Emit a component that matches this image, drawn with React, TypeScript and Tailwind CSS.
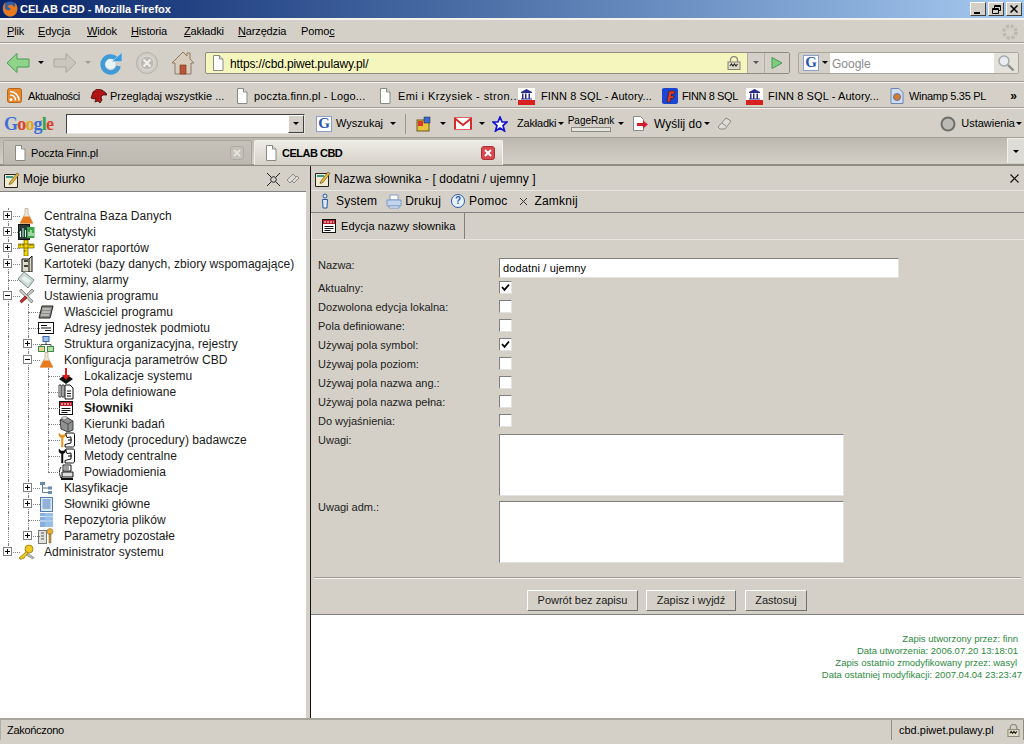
import React from "react";

const Caret: React.FC<{ c?: string }> = ({ c = "border-t-black" }) => (
  <span className={`inline-block w-0 h-0 border-x-[3px] border-x-transparent border-t-[3px] ${c}`} />
);

const PageIcon: React.FC = () => (
  <svg width="14" height="16" viewBox="0 0 14 16" className="shrink-0">
    <path d="M2.500.5h6l3.500 3.500v11.500h-9.500z" fill="#fff" stroke="#8a8a84" />
    <path d="M8.500.5v3.500h3.500" fill="#e4e4de" stroke="#8a8a84" />
  </svg>
);

const Firefox = () => (
  <svg width="16" height="16" viewBox="0 0 16 16">
    <circle cx="8" cy="8" r="7.500" fill="#2f5fa8" />
    <path d="M3 1.500c-3 4-2.500 9 .5 12s9 3 11-2 .5-8-2-10c1 2 1 4-.5 4.500-1-2-3-2.500-4.500-2-1 1-2 1-2 2 1 1 3 .5 3 2s-3 2-5 0c-1-2-.5-4 0-6.500z" fill="#e8791c" />
  </svg>
);

const BackArrow = () => (
  <svg width="24" height="22" viewBox="0 0 24 22">
    <path d="M1 11 11 1.500v5.500h12v8H11v5.500z" fill="#8fd48a" stroke="#4a9a55" />
  </svg>
);
const ForwardArrow = () => (
  <svg width="24" height="22" viewBox="0 0 24 22">
    <path d="M23 11 13 1.500v5.500H1v8h12v5.500z" fill="#c9c6be" stroke="#aaa79f" />
  </svg>
);
const Reload = () => (
  <svg width="24" height="24" viewBox="0 0 24 24">
    <circle cx="11.500" cy="13" r="5" fill="#e8f4fb" />
    <path d="M17 7.500A8 8 0 1 0 19.500 15" fill="none" stroke="#3f9bd8" strokeWidth="4.500" />
    <path d="M13 10.500h10V1.500z" fill="#3f9bd8" stroke="#bfe0f4" strokeWidth=".6" />
  </svg>
);
const Stop = () => (
  <svg width="24" height="24" viewBox="0 0 24 24">
    <circle cx="12" cy="12" r="10.500" fill="#cfccc5" stroke="#b4b1a9" />
    <circle cx="12" cy="12" r="7" fill="#bcb9b2" stroke="#e4e2dc" />
    <path d="m8.500 8.500 7 7m0-7-7 7" stroke="#f1efea" strokeWidth="2.200" />
  </svg>
);
const Home = () => (
  <svg width="24" height="24" viewBox="0 0 24 24">
    <path d="M12 1 1 12h3v11h16V12h3l-4-4V2h-3v3z" fill="#d8cdbd" stroke="#8f7a66" />
    <path d="M9 14h6v9H9z" fill="#b5563a" stroke="#8c3a24" strokeWidth=".7" />
  </svg>
);
const Lock = ({ size = 14 }: { size?: number }) => (
  <svg width={size} height={size} viewBox="0 0 14 14">
    <path d="M3.500 6V4a3.500 3.500 0 0 1 7 0v2" fill="none" stroke="#8e8c84" strokeWidth="1.400" />
    <rect x="1" y="6" width="12" height="7.500" fill="#dedcc6" stroke="#85836f" />
    <path d="m3 10 1.500-2L6 10l1.500-2L9 10l1.500-2" fill="none" stroke="#222" strokeWidth="1.100" />
  </svg>
);
const GoArrow = () => (
  <svg width="12" height="14" viewBox="0 0 12 14">
    <path d="M1 1.500v11l10-5.500z" fill="#7fcb7f" stroke="#3f9a55" />
  </svg>
);
const GBox = ({ s = 16 }: { s?: number }) => (
  <span
    className="flex items-center justify-center bg-white border border-[#8aa0c8] text-[#2a55b4] font-['Liberation_Serif'] font-bold leading-none"
    style={{ width: s, height: s, fontSize: s - 1 }}
  >
    G
  </span>
);
const Magnifier = () => (
  <svg width="18" height="18" viewBox="0 0 18 18">
    <circle cx="7" cy="7" r="5" fill="#e9edef" stroke="#a5a8a8" strokeWidth="1.500" />
    <path d="m11 11 5.500 5.500" stroke="#8e8e88" strokeWidth="2.400" />
  </svg>
);
const Rss = () => (
  <svg width="16" height="16" viewBox="0 0 16 16">
    <rect x=".5" y=".5" width="14" height="14" rx="2" fill="#e8862c" stroke="#b8641a" />
    <circle cx="4" cy="11.500" r="1.500" fill="#fff" />
    <path d="M3 7a5 5 0 0 1 5.500 5.500M3 3.500a9 9 0 0 1 9 9" fill="none" stroke="#fff" strokeWidth="1.500" />
  </svg>
);
const Dino = () => (
  <svg width="17" height="14" viewBox="0 0 17 14">
    <path d="M1 9 3 3l4-3 5 1 4 3 1 2-4 0-2 2 1 3-2 3-2-2-3 1 1-4-2 1z" fill="#b01414" stroke="#300" strokeWidth=".7" />
  </svg>
);
const Doa = () => (
  <svg width="17" height="17" viewBox="0 0 17 17">
    <rect width="17" height="17" fill="#fff" />
    <path d="M3 4 8.500 1 14 4v1H3z" fill="#2b2b8f" />
    <path d="M4 5.500h1.500v5H4zm3 0h1.500v5H7zm3.500 0H12v5h-1.500zM3 10.500h11v1H3z" fill="#2b2b8f" />
    <rect y="12" width="17" height="5" fill="#d82020" />
  </svg>
);
const FinnLogo = () => (
  <svg width="16" height="16" viewBox="0 0 16 16">
    <rect width="16" height="16" rx="2" fill="#1c46d0" />
    <path d="M5 14 7 3h6l-.5 3H9.500l-.4 2h3l-.5 2.500h-3L8 14z" fill="#e63a20" stroke="#111" strokeWidth=".5" />
  </svg>
);
const WinampDoc = () => (
  <svg width="14" height="16" viewBox="0 0 14 16">
    <path d="M1 .5h8l4 4v11H1z" fill="#cfdcf0" stroke="#6f86ad" />
    <circle cx="7" cy="9" r="3.500" fill="#d97a2a" stroke="#5a76a8" />
  </svg>
);

const Chrome: React.FC<React.PropsWithChildren<{ className?: string }>> = ({ className = "", children }) => (
  <div className={`flex items-center border-b border-[#a09d95] shrink-0 ${className}`}>{children}</div>
);

const TitleBar = () => (
  <div className="h-[18px] shrink-0 flex items-center pl-[2px] pr-[2px] bg-gradient-to-r from-[#0a246a] to-[#a6caf0]">
    <Firefox />
    <span className="ml-[2px] text-white font-bold text-[11px]">CELAB CBD - Mozilla Firefox</span>
    <div className="ml-auto flex">
      {[0, 1, 2].map((i) => (
        <span
          key={i}
          className={`w-4 h-[14px] bg-[#d4d0c8] border border-t-white border-l-white border-r-[#404040] border-b-[#404040] flex items-center justify-center ${i === 1 ? "mx-[2px]" : ""}`}
        >
          {i === 0 ? <span className="w-[6px] h-[2px] bg-black mt-[7px] -ml-[2px]" /> : i === 1 ? (
            <svg width="9" height="9" viewBox="0 0 9 9"><path d="M2.500.5h6v5h-2M2.500 1.500h6M.5 3.500h6v5h-6zM.5 4.500h6M2.500.5v3" fill="none" stroke="#000" /></svg>
          ) : (
            <svg width="8" height="8" viewBox="0 0 8 8"><path d="m.5.500 7 7m0-7-7 7" stroke="#000" strokeWidth="1.500" /></svg>
          )}
        </span>
      ))}
    </div>
  </div>
);

const menu: [string, string, string, string][] = [
  ["", "P", "lik", "w-[31px]"],
  ["", "E", "dycja", "w-[49px]"],
  ["", "W", "idok", "w-[44px]"],
  ["", "H", "istoria", "w-[53px]"],
  ["", "Z", "akładki", "w-[54px]"],
  ["", "N", "arzędzia", "w-[63px]"],
  ["Pomo", "c", "", "w-[40px]"],
];

const MenuBar = () => (
  <Chrome className="h-[25px] border-t-2 border-t-[#f4f2ec] pl-[7px] pr-[5px] pt-[1px] text-[11px] tracking-[-0.15px]">
    {menu.map(([a, u, b, w]) => (
      <span key={u + b} className={w}>
        {a}
        <span className="underline">{u}</span>
        {b}
      </span>
    ))}
    <svg width="18" height="18" viewBox="0 0 18 18" className="ml-auto">
      <circle cx="9" cy="9" r="6" fill="none" stroke="#bdbab2" strokeWidth="3.500" strokeDasharray="3 1.700" />
    </svg>
  </Chrome>
);

const NavBar = () => (
  <Chrome className="h-[39px] border-t border-t-[#f4f2ec] pl-[6px] pr-[5px]">
    <BackArrow />
    <span className="ml-[8px] flex"><Caret /></span>
    <span className="ml-[9px] flex"><ForwardArrow /></span>
    <span className="ml-[8px] flex"><Caret c="border-t-[#a09d95]" /></span>
    <span className="ml-[8px] flex"><Reload /></span>
    <span className="ml-[12px] flex"><Stop /></span>
    <span className="ml-[12px] flex"><Home /></span>
    <div className="ml-[10px] w-[585px] h-[22px] flex items-center rounded-[2px] border border-[#8f8c84] bg-[#f5f6be]">
      <span className="ml-[5px] flex"><PageIcon /></span>
      <span className="ml-[5px] text-[12px] tracking-[-0.15px] pt-[2px]">https://cbd.piwet.pulawy.pl/</span>
      <span className="ml-auto mr-[6px] flex"><Lock /></span>
      <span className="w-[17px] h-full bg-[#d4d0c8] border-l border-[#b0ada5] flex items-center justify-center"><Caret c="border-t-[#555]" /></span>
      <span className="w-[25px] h-full bg-[#d4d0c8] border-l border-[#b0ada5] flex items-center justify-center rounded-r-[2px]"><GoArrow /></span>
    </div>
    <div className="ml-[8px] w-[221px] h-[22px] flex items-center border border-[#a9a69e] rounded-[2px]">
      <span className="pl-[4px] w-[31px] flex items-center gap-[3px]"><GBox /><Caret /></span>
      <span className="w-[164px] h-full bg-white flex items-center pl-[2px] pt-[2px] text-[12px] text-[#8a8a8a]">Google</span>
      <span className="flex-1 h-full bg-[#e3e1da] flex items-center justify-center"><Magnifier /></span>
    </div>
  </Chrome>
);

const bookmarks: { icon: React.ReactNode; label: string; w: string; gap: string; t: string }[] = [
  { icon: <Rss />, label: "Aktualności", w: "w-[83px]", gap: "gap-[5px]", t: "tracking-[-0.4px]" },
  { icon: <Dino />, label: "Przeglądaj wszystkie ...", w: "w-[145px]", gap: "gap-[3px]", t: "tracking-normal" },
  { icon: <PageIcon />, label: "poczta.finn.pl - Logo...", w: "w-[143px]", gap: "gap-[5px]", t: "tracking-[0.13px]" },
  { icon: <PageIcon />, label: "Emi i Krzysiek - stron...", w: "w-[140px]", gap: "gap-[6px]", t: "tracking-[0.4px]" },
  { icon: <Doa />, label: "FINN 8 SQL - Autory...", w: "w-[144px]", gap: "gap-[6px]", t: "tracking-[0.1px]" },
  { icon: <FinnLogo />, label: "FINN 8 SQL", w: "w-[84px]", gap: "gap-[4px]", t: "tracking-[-0.4px]" },
  { icon: <Doa />, label: "FINN 8 SQL - Autory...", w: "w-[144px]", gap: "gap-[5px]", t: "tracking-[0.1px]" },
  { icon: <WinampDoc />, label: "Winamp 5.35 PL", w: "w-[112px]", gap: "gap-[5px]", t: "tracking-[-0.3px]" },
];

const BookmarksBar = () => (
  <Chrome className="h-[26px] border-t border-t-[#f4f2ec] pl-[7px] pt-[2px] text-[11px]">
    {bookmarks.map((b, i) => (
      <span key={i} className={`flex items-center whitespace-nowrap ${b.w} ${b.gap}`}>
        <span className="flex shrink-0">{b.icon}</span>
        <span className={b.t}>{b.label}</span>
      </span>
    ))}
    <span className="ml-auto mr-[7px] font-bold text-[12px] leading-none">»</span>
  </Chrome>
);

const GoogleBar = () => (
  <Chrome className="h-[30px] border-t border-t-[#f4f2ec] pl-[4px] pt-[1px] text-[11px]">
    <span className="w-[62px] font-['Liberation_Serif'] font-bold text-[18px] leading-none tracking-[-0.8px]">
      <span className="text-[#3c6fd8]">G</span>
      <span className="text-[#d8442e]">o</span>
      <span className="text-[#e0a818]">o</span>
      <span className="text-[#3c6fd8]">g</span>
      <span className="text-[#3aa04a]">l</span>
      <span className="text-[#d8442e]">e</span>
    </span>
    <div className="w-[239px] h-5 bg-white border border-t-[#404040] border-l-[#404040] border-r-[#e8e6e0] border-b-[#e8e6e0] flex justify-end">
      <span className="w-4 h-[18px] bg-[#d4d0c8] border border-t-white border-l-white border-r-[#404040] border-b-[#404040] flex items-center justify-center"><Caret /></span>
    </div>
    <span className="ml-[11px] flex"><GBox /></span>
    <span className="ml-[4px] w-[54px]">Wyszukaj</span>
    <Caret />
    <span className="ml-[9px] w-[9px] h-5 border-l border-[#9a978f]" />
    <svg width="16" height="16" viewBox="0 0 16 16" className="ml-[2px]">
      <rect x="1" y="4" width="12" height="11" fill="#e8c23a" stroke="#6a5a20" />
      <rect x="2" y="5" width="5" height="5" fill="#d83a2a" />
      <rect x="8" y="1" width="6" height="6" fill="#3a6ad0" stroke="#223" strokeWidth=".5" />
    </svg>
    <span className="ml-[8px] flex"><Caret /></span>
    <svg width="18" height="13" viewBox="0 0 18 13" className="ml-[8px]">
      <rect x=".5" y=".5" width="17" height="12" fill="#fff" stroke="#e06060" />
      <path d="M1 1.500 9 8l8-6.500M1 1v11M17 1v11" fill="none" stroke="#d82a2a" strokeWidth="2" />
    </svg>
    <span className="ml-[7px] flex"><Caret /></span>
    <svg width="16" height="16" viewBox="0 0 16 16" className="ml-[7px]">
      <path d="m8 1 2 5h5l-4 3.500 1.500 5.500L8 12l-4.500 3L5 9.500 1 6h5z" fill="#fff" stroke="#1414d0" strokeWidth="1.700" />
    </svg>
    <span className="ml-[9px] w-[41px] tracking-[-0.2px]">Zakładki</span>
    <span className="flex"><Caret /></span>
    <span className="ml-[5px] w-[44px] flex flex-col items-center leading-none">
      <span className="text-[10px]">PageRank</span>
      <span className="mt-[1px] w-[40px] h-[5px] border border-[#8d8a82] bg-[#e4e2dc]" />
    </span>
    <span className="ml-[5px] flex"><Caret /></span>
    <svg width="17" height="17" viewBox="0 0 17 17" className="ml-[8px]">
      <path d="M1.500 1.500h7l3 3v11h-10z" fill="#fff" stroke="#8a8a84" />
      <path d="M5 8h6V5.500l5 4-5 4V11H5z" fill="#d01c2c" />
    </svg>
    <span className="ml-[5px] w-[49px] text-[12px]">Wyślij do</span>
    <span className="ml-[1px] flex"><Caret /></span>
    <svg width="15" height="15" viewBox="0 0 15 15" className="ml-[7px]">
      <path d="M1 11 9 2l5 3-6 8H3z" fill="#dedcd6" stroke="#8d8a82" />
      <path d="m5 7 4 3" stroke="#8d8a82" />
    </svg>
    <span className="ml-auto flex items-center">
      <svg width="16" height="16" viewBox="0 0 16 16">
        <circle cx="8" cy="8" r="7.500" fill="#6f6d67" />
        <circle cx="8" cy="8" r="5.500" fill="#bcbab4" />
      </svg>
      <span className="ml-[5px]">Ustawienia</span>
      <span className="ml-[1px] mr-[2px] flex"><Caret /></span>
    </span>
  </Chrome>
);

const BrowserTab: React.FC<{ label: string; active?: boolean }> = ({ label, active }) => (
  <div
    className={`w-[249px] h-[25px] -mb-[2px] relative flex items-center pl-[9px] pr-[7px] rounded-t-[2px] text-[11px] ${
      active
        ? "bg-gradient-to-b from-[#eeece6] to-[#d4d0c8] font-bold tracking-[-0.5px] border-x border-t border-[#f2f0ea]"
        : "bg-gradient-to-b from-[#c6c2ba] to-[#bdb9b1] tracking-[-0.2px] border border-[#a8a59d]"
    }`}
  >
    <PageIcon />
    <span className="ml-[4px] pt-[1px]">{label}</span>
    <span
      className={`ml-auto w-[14px] h-[14px] rounded-[3px] flex items-center justify-center ${
        active ? "bg-[#d8484c] border border-[#a83034]" : "bg-[#c4c1b9] border border-[#aeaba3]"
      }`}
    >
      <svg width="8" height="8" viewBox="0 0 8 8"><path d="m1 1 6 6m0-6-6 6" stroke={active ? "#fff" : "#e4e2dc"} strokeWidth="2" /></svg>
    </span>
  </div>
);

const TabBar = () => (
  <div className="h-[28px] shrink-0 flex items-end pl-[3px] gap-[2px] bg-gradient-to-b from-[#bcb8b0] to-[#d4d0c8] border-b-2 border-[#8f8c84] pb-[1px]">
    <BrowserTab label="Poczta Finn.pl" />
    <BrowserTab label="CELAB CBD" active />
    <span className="ml-auto w-[17px] h-[25px] bg-[#dedcd6] border-l border-t border-[#f2f0ea] flex items-center justify-center"><Caret /></span>
  </div>
);

/* tree icons */
const Desk = () => (
  <svg width="17" height="17" viewBox="0 0 17 17">
    <path d="M1.500 3.500h13v13h-13z" fill="#f4ecd0" stroke="#222" />
    <path d="M3 5h7v2H3z" fill="#3a9a8a" />
    <path d="m7 11 7-9 2 1.500-7 9-3 1z" fill="#e8b830" stroke="#543" strokeWidth=".6" />
  </svg>
);
const Flask = () => (
  <svg width="17" height="16" viewBox="0 0 17 16">
    <path d="M7 .5h3v5l5 9.500H2l5-9.500z" fill="#efe6d4" stroke="#b0a890" strokeWidth=".7" />
    <path d="M5.500 8.500h6l3.500 7H2z" fill="#e67a1c" />
  </svg>
);
const Stats = () => (
  <svg width="17" height="16" viewBox="0 0 17 16">
    <rect x=".5" y=".5" width="11" height="15" fill="#2a3a36" stroke="#111" />
    <rect x="9" y="3" width="7.500" height="11" fill="#3aa848" />
    <path d="M2.500 13V7m2.500 6V4m2.500 9V6" stroke="#cfe" />
    <path d="M11 12V8m2 4V6m2 6V9" stroke="#fff" />
  </svg>
);
const Ruler = () => (
  <svg width="17" height="16" viewBox="0 0 17 16">
    <path d="M0 4h16v4H0zM6 0h4v16H6z" fill="#f5d800" stroke="#6a5c00" strokeWidth=".7" />
    <path d="M2 4v2m3-2v2m7-2v2m2-2v2M6 11h2" stroke="#333" strokeWidth=".7" />
  </svg>
);
const Cabinet = () => (
  <svg width="15" height="16" viewBox="0 0 15 16">
    <path d="M3 3h7l3-3v16H3z" fill="#dddcc8" stroke="#111" />
    <path d="M5 5h4M5 10h4" stroke="#111" strokeWidth="1.500" />
    <path d="M10 3v13" stroke="#111" />
  </svg>
);
const Diamond = () => (
  <svg width="18" height="16" viewBox="0 0 18 16">
    <path d="m1 7 6-7 10 8-6 8z" fill="#cfe2dc" stroke="#7f8a86" />
    <path d="m3.500 7 3.500-4 7.500 5.500-3.500 4z" fill="#e8f2ef" stroke="#aab" strokeWidth=".5" />
  </svg>
);
const Tools = () => (
  <svg width="17" height="16" viewBox="0 0 17 16">
    <path d="M3 1 15 13l-1.500 2L1.500 3z" fill="#c8c8c4" stroke="#666" strokeWidth=".7" />
    <path d="m14 1-5 5 1.500 1.500L16 3z" fill="#c8c8c4" stroke="#666" strokeWidth=".7" />
    <path d="M7 8l-5 5 1.500 2L9 10z" fill="#c82c2c" stroke="#600" strokeWidth=".6" />
  </svg>
);
const Owner = () => (
  <svg width="16" height="14" viewBox="0 0 16 14">
    <path d="M4 1h11l-3 12H1z" fill="#8a8a88" stroke="#222" />
    <path d="M4.500 4h8M4 7h8M3 10h8" stroke="#e4e4e0" />
  </svg>
);
const AddressCard = () => (
  <svg width="16" height="12" viewBox="0 0 16 12">
    <rect x=".5" y=".5" width="15" height="11" fill="#fff" stroke="#111" />
    <path d="M3 3.500h6M3 6h10M7 8.500h6" stroke="#111" />
  </svg>
);
const Org = () => (
  <svg width="16" height="16" viewBox="0 0 16 16">
    <rect x="5" y="0.500" width="6" height="5" fill="#9cc4ec" stroke="#3a68a8" />
    <path d="M8 5.500v3M3 10V8.500h10V10" fill="none" stroke="#555" />
    <rect x=".5" y="10.500" width="6" height="5" fill="#e8d48a" stroke="#3a8a4a" />
    <rect x="9.500" y="10.500" width="6" height="5" fill="#b8e0a0" stroke="#3a8a4a" />
  </svg>
);
const DownArrowBlack = () => (
  <svg width="16" height="16" viewBox="0 0 16 16">
    <path d="m8 6 7 5-7 5-7-5z" fill="#111" />
    <path d="M7 0h2v7h3l-4 5-4-5h3z" fill="#e01818" />
  </svg>
);
const Pages = () => (
  <svg width="16" height="16" viewBox="0 0 16 16">
    <path d="M1 1h2v12H1zM4 1h2v12H4z" fill="#fff" stroke="#111" strokeWidth=".8" />
    <path d="M7 1h5l3 3v11H7z" fill="#fff" stroke="#111" />
    <path d="M9 7h4M9 9.500h4M9 12h4" stroke="#111" />
  </svg>
);
const Dict = () => (
  <svg width="14" height="14" viewBox="0 0 14 14">
    <rect x=".5" y=".5" width="13" height="13" fill="#fff" stroke="#111" />
    <rect x="1" y="1" width="12" height="4" fill="#b81c28" />
    <path d="M2 3h10" stroke="#fff" strokeDasharray="2 1" />
    <path d="M2.500 7.500h9M2.500 9.500h9M2.500 11.500h6" stroke="#111" />
  </svg>
);
const Directions = () => (
  <svg width="15" height="16" viewBox="0 0 15 16">
    <path d="M1 4 7 1l7 4v9l-5 2-7-3z" fill="#8f9290" stroke="#222" strokeWidth=".8" />
    <path d="m1 4 8 4v8M9 8l5-3" fill="none" stroke="#333" strokeWidth=".7" />
    <path d="m2 2 4-2 3 2-4 2z" fill="#ddd" stroke="#444" strokeWidth=".5" />
  </svg>
);
const Method: React.FC<{ c: string }> = ({ c }) => (
  <svg width="17" height="16" viewBox="0 0 17 16">
    <path d="M1 1v3l2.500 2v9H5V6l2.500-2V1L6 3H3z" fill={c} stroke={c} strokeWidth=".5" />
    <path d="M8 1h7c1.500 0 1.500 1 1.500 2v10c0 1.500-1 2-2 2H7v-2.500L13 11V5L9 5.500 8 3z" fill="#fff" stroke="#111" />
    <path d="M10 8h4" stroke="#111" />
  </svg>
);
const Notify = () => (
  <svg width="16" height="16" viewBox="0 0 16 16">
    <path d="M5 1h8v6H5zM3 3c-2 3-2 7 0 11l1-1" fill="#fff" stroke="#111" />
    <path d="M4 8h11v5H4z" fill="#ddd" stroke="#111" />
    <path d="M6 3h5M6 5h5" stroke="#111" strokeWidth=".8" />
    <path d="M3 15h12" stroke="#111" strokeWidth="2" />
  </svg>
);
const Classif = () => (
  <svg width="14" height="14" viewBox="0 0 14 14">
    <path d="M3.500 3v8.500H9M3.500 7H9" fill="none" stroke="#5a7898" />
    <rect x="1" y="1" width="5" height="3" fill="#6a8ab0" />
    <rect x="9" y="5.500" width="4" height="3" fill="#6a8ab0" />
    <rect x="9" y="10" width="4" height="3" fill="#6a8ab0" />
  </svg>
);
const DictMain = () => (
  <svg width="13" height="15" viewBox="0 0 13 15">
    <rect x=".5" y=".5" width="12" height="14" fill="#dbe8f8" stroke="#4d7cb8" />
    <path d="M2.500 3h8M2.500 5h8M2.500 7h8M2.500 9h8M2.500 11h8" stroke="#4d7cb8" />
  </svg>
);
const Repo = () => (
  <svg width="13" height="14" viewBox="0 0 13 14">
    <rect width="13" height="14" fill="#86aedc" />
    <path d="M0 3.500h13M0 8h13" stroke="#e4eefa" />
    <rect x="5" width="8" height="14" fill="#a6c8ec" opacity=".6" />
  </svg>
);
const Params = () => (
  <svg width="16" height="16" viewBox="0 0 16 16">
    <rect x=".5" y="2.500" width="8" height="13" fill="#e4e2dc" stroke="#777" />
    <path d="M3 5h3M3 8h3M3 11h3" stroke="#555" />
    <circle cx="12" cy="3.500" r="3" fill="#e8b030" stroke="#765" strokeWidth=".5" />
    <path d="M11 6h2v9h-2z" fill="#d09a20" stroke="#654" strokeWidth=".5" />
  </svg>
);
const Key = () => (
  <svg width="17" height="16" viewBox="0 0 17 16">
    <path d="m6 10 9 5 1-1.500-8-5.500z" fill="#b8b8b4" stroke="#666" strokeWidth=".5" />
    <circle cx="11" cy="5" r="4" fill="#f0c820" stroke="#8a6e00" strokeWidth=".7" />
    <path d="M8.500 7.500 1 14l2 1.500 2-1.500 1 .5 1-2 3-3z" fill="#f0c820" stroke="#8a6e00" strokeWidth=".7" />
  </svg>
);

type Row = {
  label: string;
  icon: React.ReactNode;
  level: 0 | 1 | 2;
  box?: "+" | "-";
  guides: boolean[];
  bold?: boolean;
  end?: boolean;
};

const rows: Row[] = [
  { label: "Centralna Baza Danych", icon: <Flask />, level: 0, box: "+", guides: [] },
  { label: "Statystyki", icon: <Stats />, level: 0, box: "+", guides: [] },
  { label: "Generator raportów", icon: <Ruler />, level: 0, box: "+", guides: [] },
  { label: "Kartoteki (bazy danych, zbiory wspomagające)", icon: <Cabinet />, level: 0, box: "+", guides: [] },
  { label: "Terminy, alarmy", icon: <Diamond />, level: 0, guides: [] },
  { label: "Ustawienia programu", icon: <Tools />, level: 0, box: "-", guides: [] },
  { label: "Właściciel programu", icon: <Owner />, level: 1, guides: [true] },
  { label: "Adresy jednostek podmiotu", icon: <AddressCard />, level: 1, guides: [true] },
  { label: "Struktura organizacyjna, rejestry", icon: <Org />, level: 1, box: "+", guides: [true] },
  { label: "Konfiguracja parametrów CBD", icon: <Flask />, level: 1, box: "-", guides: [true] },
  { label: "Lokalizacje systemu", icon: <DownArrowBlack />, level: 2, guides: [true, true] },
  { label: "Pola definiowane", icon: <Pages />, level: 2, guides: [true, true] },
  { label: "Słowniki", icon: <Dict />, level: 2, guides: [true, true], bold: true },
  { label: "Kierunki badań", icon: <Directions />, level: 2, guides: [true, true] },
  { label: "Metody (procedury) badawcze", icon: <Method c="#e89018" />, level: 2, guides: [true, true] },
  { label: "Metody centralne", icon: <Method c="#111" />, level: 2, guides: [true, true] },
  { label: "Powiadomienia", icon: <Notify />, level: 2, guides: [true, true], end: true },
  { label: "Klasyfikacje", icon: <Classif />, level: 1, box: "+", guides: [true] },
  { label: "Słowniki główne", icon: <DictMain />, level: 1, box: "+", guides: [true] },
  { label: "Repozytoria plików", icon: <Repo />, level: 1, guides: [true] },
  { label: "Parametry pozostałe", icon: <Params />, level: 1, box: "+", guides: [true], end: true },
  { label: "Administrator systemu", icon: <Key />, level: 0, box: "+", guides: [], end: true },
];

const dotted = "border-[#808080] border-dotted";

const TreeRow: React.FC<{ row: Row }> = ({ row }) => (
  <div className="h-4 flex items-center">
    {[0, 1].slice(0, row.level).map((i) => (
      <span key={i} className="relative w-5 h-4 shrink-0">
        {row.guides[i] && <span className={`absolute left-2 top-0 bottom-0 border-l ${dotted}`} />}
      </span>
    ))}
    <span className="relative w-5 h-4 shrink-0 flex items-center">
      <span className={`absolute left-2 top-0 ${row.end ? "h-2" : "bottom-0"} border-l ${dotted}`} />
      <span className={`absolute left-2 right-0 top-2 border-t ${dotted}`} />
      {row.box && (
        <span className="absolute left-[3px] top-[3px] w-[9px] h-[9px] bg-white border border-[#808080] flex items-center justify-center">
          <span className="relative w-[5px] h-px bg-black">
            {row.box === "+" && <span className="absolute left-[2px] -top-[2px] w-px h-[5px] bg-black" />}
          </span>
        </span>
      )}
    </span>
    <span className="w-[18px] h-4 -ml-[3px] shrink-0 flex items-center justify-center">{row.icon}</span>
    <span className={`ml-[9px] whitespace-nowrap text-[12px] tracking-[0.05px] text-[#1a1a1a] ${row.bold ? "font-bold" : ""}`}>{row.label}</span>
  </div>
);

const Sidebar = () => (
  <div className="w-[306px] shrink-0 flex flex-col">
    <div className="h-[26px] shrink-0 flex items-center pl-[3px] pr-[5px] pt-[1px] bg-[#d4d0c8] border-b border-[#808080]">
      <Desk />
      <span className="ml-[3px] text-[12px]">Moje biurko</span>
      <svg width="15" height="15" viewBox="0 0 15 15" className="ml-auto">
        <path d="m1 1 4 4m9-4-4 4M1 14l4-4m9 4-4-4" stroke="#222" />
        <circle cx="7.500" cy="7.500" r="2.800" fill="none" stroke="#222" />
      </svg>
      <svg width="17" height="15" viewBox="0 0 17 15" className="ml-[3px]">
        <path d="m3 8 6-6 3 3-6 6zm5 1 5-5 2 2-5 5z" fill="#dcdad4" stroke="#8e8b83" />
      </svg>
    </div>
    <div className="flex-1 bg-white pt-[16px] overflow-hidden">
      {rows.map((r, i) => (
        <TreeRow key={r.label + i} row={r} />
      ))}
    </div>
  </div>
);

const Toolbtn: React.FC<React.PropsWithChildren<{ label: string; cls: string }>> = ({ label, cls, children }) => (
  <span className={`flex items-center ${cls}`}>
    {children}
    <span className="text-[12px] tracking-[0.2px]">{label}</span>
  </span>
);

const checks: [string, boolean][] = [
  ["Aktualny:", true],
  ["Dozwolona edycja lokalna:", false],
  ["Pola definiowane:", false],
  ["Używaj pola symbol:", true],
  ["Używaj pola poziom:", false],
  ["Używaj pola nazwa ang.:", false],
  ["Używaj pola nazwa pełna:", false],
  ["Do wyjaśnienia:", false],
];

const Sunken = "bg-white border border-t-[#808080] border-l-[#808080] border-r-[#e4e2dc] border-b-[#e4e2dc]";

const Checkbox: React.FC<{ on: boolean }> = ({ on }) => (
  <span className={`w-[13px] h-[13px] flex items-center justify-center ${Sunken}`}>
    {on && (
      <svg width="9" height="9" viewBox="0 0 9 9">
        <path d="m1 4 2.500 2.800L8 1.500" fill="none" stroke="#000" strokeWidth="1.800" />
      </svg>
    )}
  </span>
);

const FormLabel: React.FC<React.PropsWithChildren<{ cls?: string }>> = ({ cls = "", children }) => (
  <span className={`w-[181px] text-[11px] leading-[13px] text-[#222] ${cls}`}>{children}</span>
);

const Btn: React.FC<{ label: string; w: string }> = ({ label, w }) => (
  <span className={`h-[21px] ${w} flex items-center justify-center bg-[#d4d0c8] border border-t-white border-l-white border-r-[#707070] border-b-[#707070] text-[11px] text-[#222]`}>
    {label}
  </span>
);

const Detail = () => (
  <div className="flex-1 flex flex-col min-w-0 border-l-[1px] border-[#111]">
    <div className="h-[25px] shrink-0 flex items-center pl-[3px] pr-[5px] pt-[1px] bg-[#d4d0c8] border-b border-[#e8e6e0]">
      <Desk />
      <span className="ml-[3px] text-[12px] tracking-[0.1px]">Nazwa słownika - [ dodatni / ujemny ]</span>
      <svg width="9" height="9" viewBox="0 0 9 9" className="ml-auto">
        <path d="m.5.500 8 8m0-8-8 8" stroke="#111" strokeWidth="1.200" />
      </svg>
    </div>
    <div className="h-[22px] shrink-0 flex items-center pl-[9px] pb-[1px] bg-[#d4d0c8] border-b border-[#808080]">
      <Toolbtn label="System" cls="gap-[6px]">
        <svg width="10" height="16" viewBox="0 0 10 16">
          <circle cx="5" cy="3" r="2" fill="#dbe8f8" stroke="#2a5a9a" />
          <path d="M2.500 6.500h5l-.5 8.500H3z" fill="#dbe8f8" stroke="#2a5a9a" />
        </svg>
      </Toolbtn>
      <Toolbtn label="Drukuj" cls="ml-[9px] gap-[3px]">
        <svg width="16" height="15" viewBox="0 0 16 15">
          <path d="M4 1h8v5H4z" fill="#fff" stroke="#7a9ac8" />
          <path d="M1 6h14v6H1z" fill="#c2d4ec" stroke="#7a9ac8" />
          <path d="M3 12h10v2H3z" fill="#fff" stroke="#7a9ac8" />
        </svg>
      </Toolbtn>
      <Toolbtn label="Pomoc" cls="ml-[10px] gap-[4px]">
        <span className="w-[14px] h-[14px] rounded-full bg-[#eaf2fb] border border-[#2a5ab0] flex items-center justify-center text-[10px] font-bold text-[#2a5ab0] leading-none">?</span>
      </Toolbtn>
      <Toolbtn label="Zamknij" cls="ml-[12px] gap-[6px]">
        <svg width="9" height="9" viewBox="0 0 9 9"><path d="m1 1 7 7m0-7-7 7" stroke="#333" /></svg>
      </Toolbtn>
    </div>
    <div className="h-[27px] shrink-0 flex bg-[#d4d0c8] border-b border-[#e8e6e0]">
      <div className="w-[154px] h-[26px] flex items-center pl-[10px] gap-[5px] border-r border-[#808080] border-l border-l-[#f0eee8]">
        <Dict />
        <span className="text-[11px] tracking-[0.1px]">Edycja nazwy słownika</span>
      </div>
    </div>
    <div className="h-[375px] shrink-0 bg-[#d4d0c8] border-b border-[#808080] flex flex-col">
      <div className="mx-[7px] mt-[18px] flex flex-col">
        <div className="h-[20px] flex items-start">
          <FormLabel cls="pt-[1px]">Nazwa:</FormLabel>
          <span className={`w-[400px] h-[20px] flex items-center pl-[3px] text-[11px] tracking-[0.15px] ${Sunken}`}>dodatni / ujemny</span>
        </div>
        <div className="flex flex-col">
          {checks.map(([l, on]) => (
            <div key={l} className="h-[19px] flex items-center">
              <FormLabel cls="pt-[2px]">{l}</FormLabel>
              <Checkbox on={on} />
            </div>
          ))}
        </div>
        <div className="mt-[4px] flex">
          <FormLabel>Uwagi:</FormLabel>
          <span className={`w-[345px] h-[62px] ${Sunken}`} />
        </div>
        <div className="mt-[5px] flex">
          <FormLabel>Uwagi adm.:</FormLabel>
          <span className={`w-[345px] h-[62px] ${Sunken}`} />
        </div>
      </div>
      <div className="mt-[14px] mx-[3px] border-t border-[#a09d95] shadow-[0_1px_0_#f4f2ec]" />
      <div className="mt-[12px] pl-[216px] flex">
        <Btn label="Powrót bez zapisu" w="w-[111px]" />
        <span className="w-[8px]" />
        <Btn label="Zapisz i wyjdź" w="w-[90px]" />
        <span className="w-[9px]" />
        <Btn label="Zastosuj" w="w-[62px]" />
      </div>
    </div>
    <div className="flex-1 bg-white pt-[18px] pr-[2px] flex flex-col items-end text-[9.5px] leading-[12px] text-[#2d8a3e]">
      <span className="pr-[4px]">Zapis utworzony przez: finn</span>
      <span className="pr-[4px]">Data utworzenia: 2006.07.20 13:18:01</span>
      <span className="pr-[5px]">Zapis ostatnio zmodyfikowany przez: wasyl</span>
      <span>Data ostatniej modyfikacji: 2007.04.04 23:23:47</span>
    </div>
  </div>
);

const StatusBar = () => (
  <div className="h-[26px] shrink-0 flex items-stretch bg-[#d4d0c8] border-t-2 border-[#a8a59d] pb-[4px] text-[11px]">
    <div className="flex-1 flex items-center pl-[6px] border-l border-[#b0ada5] tracking-[-0.3px]">Zakończono</div>
    <div className="w-[133px] flex items-center pl-[7px] border-x border-[#8f8c84]">
      cbd.piwet.pulawy.pl
      <span className="ml-auto mr-[3px] flex"><Lock size={13} /></span>
    </div>
  </div>
);

export default function App() {
  return (
    <div className="w-[1024px] h-[744px] overflow-hidden flex flex-col bg-[#d4d0c8] text-black font-['Liberation_Sans',sans-serif]">
      <TitleBar />
      <MenuBar />
      <NavBar />
      <BookmarksBar />
      <GoogleBar />
      <TabBar />
      <div className="flex-1 min-h-0 flex">
        <Sidebar />
        <div className="w-1 shrink-0 bg-[#d4d0c8]" />
        <Detail />
      </div>
      <StatusBar />
    </div>
  );
}
